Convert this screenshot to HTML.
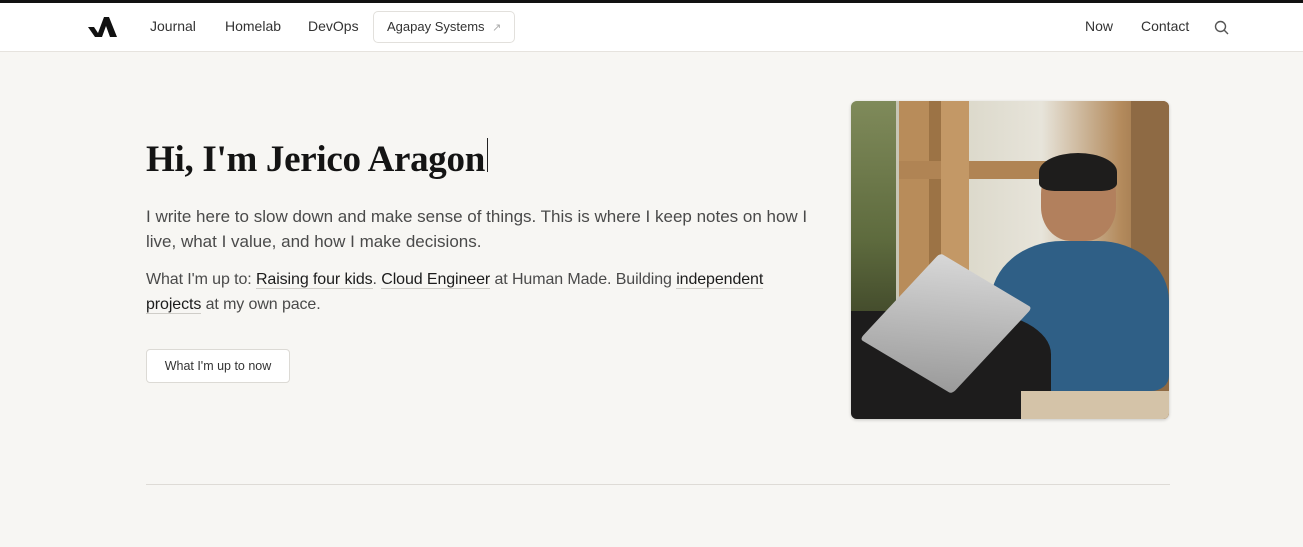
<!DOCTYPE html>
<html><head><meta charset="utf-8"><style>
*{margin:0;padding:0;box-sizing:border-box}
body{width:1303px;height:547px;overflow:hidden;background:#f7f6f3;font-family:"Liberation Sans",sans-serif;position:relative}
.top{position:absolute;left:0;top:0;width:1303px;height:3px;background:#111}
header{position:absolute;top:3px;left:0;width:1303px;height:49px;background:#fff;border-bottom:1px solid #e6e3de}
.nav{position:absolute;top:0;height:48px;line-height:47px;font-size:14px;color:#333}
.btn{position:absolute;left:373px;top:8px;width:142px;height:32px;border:1px solid #e2e0dc;border-radius:5px;font-size:13px;line-height:30px;padding-left:13px;color:#333}
h1{position:absolute;left:146px;top:138px;font-family:"Liberation Serif",serif;font-weight:bold;font-size:37px;color:#141414;letter-spacing:-0.3px}
.caret{position:absolute;left:487px;top:138px;width:1px;height:34px;background:#222}
p{position:absolute;left:146px;width:680px;font-size:16px;line-height:25px;color:#4a4a4a;letter-spacing:-0.1px}
a{color:#1c1c1c;text-decoration:none;border-bottom:1px solid #cfcdc8}
.cta{position:absolute;left:146px;top:349px;width:144px;height:34px;background:#fff;border:1px solid #dcdad5;border-radius:4px;font-size:12.5px;line-height:32px;text-align:center;color:#333}
.photo{position:absolute;left:851px;top:101px;width:318px;height:318px;border-radius:6px;overflow:hidden;box-shadow:0 1px 3px rgba(0,0,0,.2);background:#c9c6b8}
.photo div{position:absolute}
.hr{position:absolute;left:146px;top:484px;width:1024px;height:1px;background:#dedbd6}
</style></head><body>
<div class="top"></div>
<header>
<svg style="position:absolute;left:88px;top:14px" width="29" height="20" viewBox="0 0 29 20"><path d="M0 10 L6 10 L10 16 L16 0 L21 0 L29 20 L22 20 L18 9 L14 20 L7 20 Z" fill="#111"/></svg>
<div class="nav" style="left:150px">Journal</div>
<div class="nav" style="left:225px">Homelab</div>
<div class="nav" style="left:308px">DevOps</div>
<div class="btn">Agapay Systems <span style="color:#aaa;font-size:11px;margin-left:4px">↗</span></div>
<div class="nav" style="left:1085px">Now</div>
<div class="nav" style="left:1141px">Contact</div>
<svg style="position:absolute;left:1214px;top:17px" width="16" height="16" viewBox="0 0 16 16"><circle cx="6.5" cy="6.5" r="5" fill="none" stroke="#555" stroke-width="1.4"/><path d="M10.3 10.3 L14 14" stroke="#555" stroke-width="1.4"/></svg>
</header>
<h1>Hi, I'm Jerico Aragon</h1><div class="caret"></div>
<p style="top:204px;font-size:17px;letter-spacing:0;width:668px">I write here to slow down and make sense of things. This is where I keep notes on how I live, what I value, and how I make decisions.</p>
<p style="top:267px;width:640px">What I'm up to: <a>Raising four kids</a>. <a>Cloud Engineer</a> at Human Made. Building <a>independent projects</a> at my own pace.</p>
<div class="cta">What I'm up to now</div>
<div class="photo">
<div style="left:0;top:0;width:318px;height:318px;background:linear-gradient(90deg,#b7b7a4 0%,#d9d6c7 30%,#e7e4da 60%,#b38a5c 85%,#8a6540 100%)"></div>
<div style="left:0;top:0;width:45px;height:230px;background:linear-gradient(180deg,#7f8a5a,#5e6b3e 60%,#3e4528)"></div>
<div style="left:48px;top:0;width:30px;height:318px;background:#b88c5a"></div>
<div style="left:78px;top:0;width:14px;height:318px;background:#9c7345"></div>
<div style="left:48px;top:60px;width:150px;height:18px;background:#b08454"></div>
<div style="left:90px;top:0;width:28px;height:240px;background:#c39866"></div>
<div style="left:280px;top:0;width:38px;height:318px;background:#8e6a44"></div>
<div style="left:190px;top:55px;width:75px;height:85px;border-radius:45% 45% 40% 40%;background:#b2805d"></div>
<div style="left:188px;top:52px;width:78px;height:38px;border-radius:50% 50% 20% 20%;background:#1e1d1c"></div>
<div style="left:140px;top:140px;width:178px;height:150px;border-radius:40% 40% 10% 10%;background:#2f5f86"></div>
<div style="left:0;top:210px;width:200px;height:108px;background:#1d1c1c;border-radius:0 40% 0 0"></div>
<div style="left:30px;top:175px;width:130px;height:95px;background:linear-gradient(160deg,#d8d8d8,#9a9a9a);transform:skewX(-25deg) rotate(25deg);border-radius:4px"></div>
<div style="left:170px;top:290px;width:148px;height:28px;background:#d4c3a8"></div>
</div>
<div class="hr"></div>
</body></html>
